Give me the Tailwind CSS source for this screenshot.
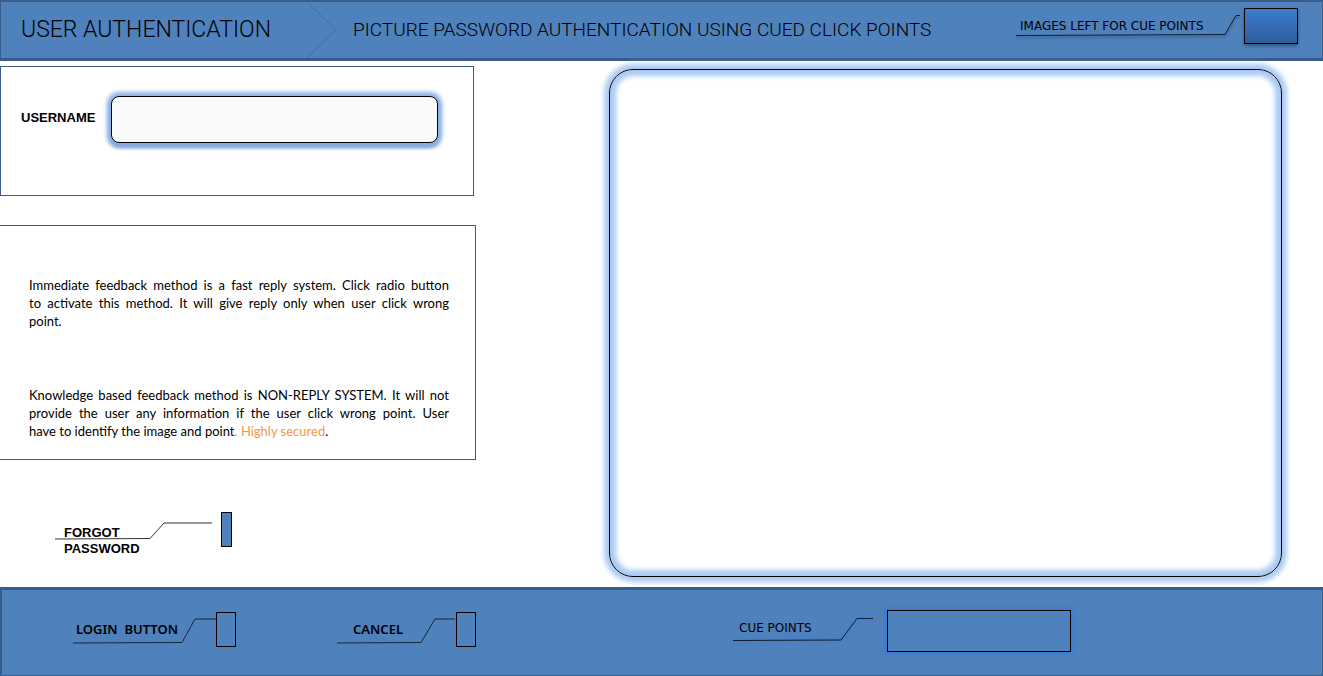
<!DOCTYPE html>
<html lang="en">
<head>
<meta charset="utf-8">
<title>User Authentication</title>
<script src="https://cdn.jsdelivr.net/npm/@tailwindcss/browser@4"></script>
</head>
<body class="flex min-h-screen flex-col bg-white font-['Noto_Sans',sans-serif] text-black">
  <header class="flex h-[61px] shrink-0 border-x border-t-2 border-b-3 border-[#385d8a] bg-[#4f81bd]">
    <h1 class="flex w-[306px] shrink-0 items-center pl-5 font-['Roboto',sans-serif] text-[23px] font-light whitespace-nowrap">USER AUTHENTICATION</h1>
    <svg class="h-14 w-[30px] shrink-0" viewBox="0 0 30 56" fill="none" stroke="#416ea5" aria-hidden="true"><path d="M0 0L29 28L0 56"/></svg>
    <p class="flex items-center pl-4 font-['Roboto',sans-serif] text-[19px] font-light whitespace-nowrap">PICTURE PASSWORD AUTHENTICATION USING CUED CLICK POINTS</p>
    <div class="mr-6 ml-auto flex items-start gap-1 pt-[6px]">
      <div class="grid shrink-0">
        <svg class="col-start-1 row-start-1 h-9 w-[224px] drop-shadow-[0_2px_1px_rgba(0,0,0,0.35)]" viewBox="0 0 224 36" fill="none" stroke="#101c2c" aria-hidden="true"><path d="M0 27.500L209 26.500L220 7.500H224"/></svg>
        <span id="left" class="col-start-1 row-start-1 pt-[9px] pl-1 font-['DejaVu_Sans',sans-serif] text-[12px] leading-[18px] whitespace-nowrap">IMAGES LEFT FOR CUE POINTS</span>
      </div>
      <output aria-labelledby="left" class="block h-9 w-[54px] border border-black bg-linear-to-b from-[#3c7cce] to-[#2d5d9b] shadow-[0_2px_3px_rgba(0,0,0,0.35)]"></output>
    </div>
  </header>

  <main class="flex flex-1">
    <div class="w-[476px] shrink-0 pt-[5px]">
      <form class="flex h-[130px] w-[474px] items-start border border-[#385d8a] pt-[29px] pl-5">
        <label for="username" class="mt-[14px] w-[90px] font-['Liberation_Sans',sans-serif] text-[13px] leading-4 font-bold">USERNAME</label>
        <input id="username" type="text" class="h-[47px] w-[327px] rounded-lg border border-black bg-[#f9fafc] px-3 shadow-[0_0_4px_4px_#8db4e6,0_3px_4px_1px_#426da8] outline-none">
      </form>
      <section class="mt-[29px] flex h-[235px] flex-col gap-14 border border-l-0 border-[#385d8a] pt-[50px] pr-[26px] pl-[29px] text-justify font-['Lato',sans-serif] text-[13px] leading-[18px]">
        <p>Immediate feedback method is a fast reply system. Click radio button to&nbsp;activate this method. It will give reply only when user click wrong point.</p>
        <p>Knowledge based feedback method is NON-REPLY SYSTEM. It will not provide the user any information if the user click wrong point. User have&nbsp;to identify the image and point<span class="text-[#f79646]">. Highly secured</span>.</p>
      </section>
      <div class="mt-[52px] flex items-start gap-[9px] pl-[55px]">
        <div class="grid">
          <svg class="col-start-1 row-start-1 h-9 w-[157px]" viewBox="0 0 157 36" fill="none" stroke="#333" aria-hidden="true"><path d="M0 27L95 26.500L109 11H157"/></svg>
          <span id="forgot" class="col-start-1 row-start-1 w-24 pt-[13px] pl-[9px] font-['Liberation_Sans',sans-serif] text-[13px] leading-4 font-bold">FORGOT PASSWORD</span>
        </div>
        <button type="button" aria-labelledby="forgot" class="h-[35px] w-[11px] border border-black bg-[#4f81bd]"></button>
      </div>
    </div>
    <section aria-label="Picture" class="mt-2 mr-[41px] mb-[10px] ml-[133px] flex-1 rounded-3xl border border-black shadow-[0_0_5px_5px_#a9caf4,inset_0_0_5px_6px_#a9caf4]"></section>
  </main>

  <footer class="relative flex h-[89px] shrink-0 items-start border-t-3 border-r border-b border-l-2 border-[#385d8a] bg-[#4f81bd] pt-5 pl-[71px]">
    <div class="flex items-start pt-[2px]">
      <div class="grid">
        <svg class="col-start-1 row-start-1 h-9 w-[143px]" viewBox="0 0 143 36" fill="none" stroke="#16263a" aria-hidden="true"><path d="M0 31L109 30.500L122 7H143"/></svg>
        <span id="login" class="col-start-1 row-start-1 pt-2 pl-[3px] text-[13px] leading-[18px] font-semibold whitespace-pre">LOGIN  BUTTON</span>
      </div>
      <button type="button" aria-labelledby="login" class="h-[35px] w-5 border border-black"></button>
    </div>
    <div class="ml-[101px] flex items-start pt-[2px]">
      <div class="grid">
        <svg class="col-start-1 row-start-1 h-9 w-[119px]" viewBox="0 0 119 36" fill="none" stroke="#16263a" aria-hidden="true"><path d="M0 31L84 30.500L98 7H118"/></svg>
        <span id="cancel" class="col-start-1 row-start-1 pt-2 pl-4 text-[13px] leading-[18px] font-semibold">CANCEL</span>
      </div>
      <button type="button" aria-labelledby="cancel" class="h-[35px] w-5 border border-black"></button>
    </div>
    <div class="ml-[257px] flex items-start gap-[14px]">
      <div class="grid">
        <svg class="col-start-1 row-start-1 h-9 w-[140px] drop-shadow-[0_0_2px_#2d78dc]" viewBox="0 0 140 36" fill="none" stroke="#101c2c" aria-hidden="true"><path d="M0 30.500L108 30L124 8.500H140"/></svg>
        <span id="cue" class="col-start-1 row-start-1 pt-[9px] pl-[6px] font-['DejaVu_Sans',sans-serif] text-[12px] leading-[18px]">CUE POINTS</span>
      </div>
      <output aria-labelledby="cue" class="block h-[42px] w-[184px] border border-black shadow-[0_0_4px_2px_#387bd2]"></output>
    </div>
  </footer>
</body>
</html>
